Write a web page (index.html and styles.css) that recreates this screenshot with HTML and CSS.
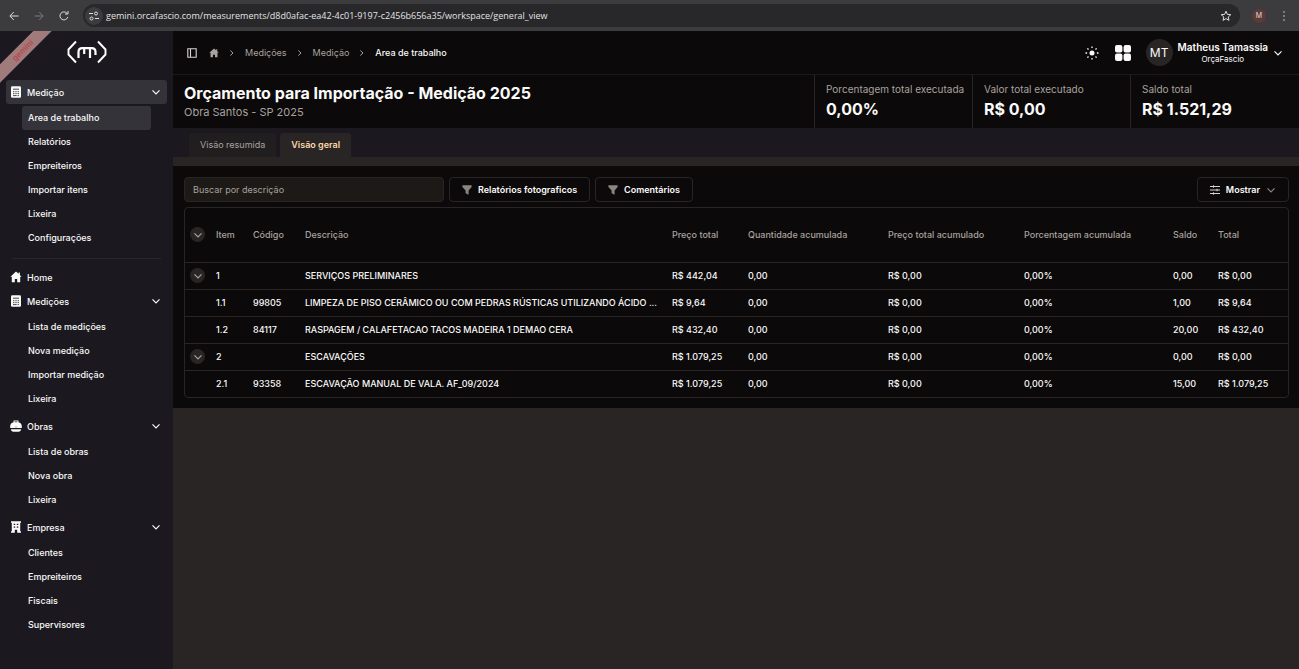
FILE: index.html
```html
<!DOCTYPE html>
<html lang="pt-BR">
<head>
    <meta charset="UTF-8">
    <meta name="viewport" content="width=device-width, initial-scale=1.0">
    <title>Orçamento para Importação - Medição 2025</title>
    <link rel="stylesheet" href="styles.css">
</head>
<body>
    <!-- Ícones compartilhados -->
    <svg class="sprite" aria-hidden="true">
        <symbol id="chevron" viewBox="0 0 10 10"><path d="M1.5 3.3L5 6.8l3.5-3.5" fill="none" stroke="currentColor" stroke-width="1.2"/></symbol>
        <symbol id="chevron-right" viewBox="0 0 10 10"><path d="M3.3 2.500L6 5 3.300 7.500" fill="none" stroke="currentColor" stroke-width="1"/></symbol>
        <symbol id="home" viewBox="0 0 12 12"><path d="M6 .5L.4 5.800h1.400v5.400h3V8h2.400v3.200h3V5.800h1.400L9.900 4V1.400H8.600v1.400z" fill="currentColor"/></symbol>
        <symbol id="calc" viewBox="0 0 12 12"><rect x="1" y=".3" width="10" height="11.4" rx="1.3" fill="currentColor"/><path d="M3 3.200h6M3 5.700h1.400M5.300 5.700h1.400M7.600 5.700H9M3 7.600h1.400M5.300 7.600h1.400M7.600 7.600H9M3 9.600h3.700M7.600 9.600H9" stroke="#1b191f" stroke-width=".8"/></symbol>
        <symbol id="helmet" viewBox="0 0 12 12"><path d="M.2 8V6.200C.2 4 1.600 2.500 3.500 2.200V.6h5v1.600c1.900.3 3.300 1.800 3.300 4V8zM.8 9.300h10.400c-.3 1.500-1.200 2.400-2.500 2.400H3.300C2 11.700 1.100 10.800.8 9.300z" fill="currentColor"/><path d="M4.500 1.800h3M5.500 7h1" stroke="#1b191f" stroke-width=".7"/></symbol>
        <symbol id="building" viewBox="0 0 12 12"><path d="M1 .3h10v1.500h-.8v8.500h.8v1.400H7.200V8.800H4.800v2.900H1v-1.400h.8V1.800H1z" fill="currentColor"/><path d="M3.700 3.300h1.500M6.800 3.300h1.500M3.700 6.100h1.500M6.800 6.100h1.500" stroke="#1b191f" stroke-width="1.300"/></symbol>
        <symbol id="funnel" viewBox="0 0 10 10"><path d="M.4.300h9.200v1.800L6.600 5.400v4.300L3.600 8.200V5.400L.4 2.100z" fill="currentColor"/></symbol>
    </svg>

    <div class="browser">
        <button class="nav-btn" aria-label="Voltar"><svg viewBox="0 0 12 12"><path d="M10.500 6H2M5.800 2L1.800 6l4 4"/></svg></button>
        <button class="nav-btn dim" aria-label="Avançar"><svg viewBox="0 0 12 12"><path d="M1.500 6H10M6.200 2l4 4-4 4"/></svg></button>
        <button class="nav-btn" aria-label="Recarregar"><svg viewBox="0 0 12 12"><path d="M9.800 7A4 4 0 1 1 9 3.300M10 1v3H7"/></svg></button>
        <div class="address">
            <button class="site-info" aria-label="Informações do site"><svg viewBox="0 0 12 12"><path d="M1 3.500h4M7 8.500h4"/><circle cx="8" cy="3.500" r="1.500"/><circle cx="3.500" cy="8.500" r="1.500"/></svg></button>
            <input class="url" type="text" aria-label="Endereço" value="gemini.orcafascio.com/measurements/d8d0afac-ea42-4c01-9197-c2456b656a35/workspace/general_view">
            <button class="star" aria-label="Favorito"><svg viewBox="0 0 12 12"><path d="M6 1.200l1.400 3.200 3.400.3-2.600 2.300.8 3.400L6 8.600l-3 1.800.8-3.400L1.200 4.700l3.400-.3z"/></svg></button>
        </div>
        <span class="profile">M</span>
        <button class="nav-btn" aria-label="Menu"><svg viewBox="0 0 12 12"><path d="M6 1.200v1.600M6 5.200v1.600M6 9.200v1.600"/></svg></button>
    </div>

    <div class="app">
        <aside class="sidebar">
            <div class="ribbon"><span>gemini</span></div>
            <svg class="logo" viewBox="0 0 40 24"><path d="M9 1.500L1.500 9.500v5L9 22.500M31 1.500l7.500 8v5L31 22.500" fill="none" stroke="#fff" stroke-width="1.900"/><path d="M11.500 18v-6q0-3.800 3.800-3.800h9.400q3.800 0 3.800 3.800v3M17.200 14V8.200M23 18V8.200" fill="none" stroke="#fff" stroke-width="2.200"/></svg>

            <nav>
                <button class="menu active"><svg><use href="#calc"/></svg>Medição<svg class="arrow"><use href="#chevron"/></svg></button>
                <ul>
                    <li><a class="current" href="#">Area de trabalho</a></li>
                    <li><a href="#">Relatórios</a></li>
                    <li><a href="#">Empreiteiros</a></li>
                    <li><a href="#">Importar itens</a></li>
                    <li><a href="#">Lixeira</a></li>
                    <li><a href="#">Configurações</a></li>
                </ul>
                <hr>
                <a class="menu" href="#"><svg><use href="#home"/></svg>Home</a>
                <button class="menu"><svg><use href="#calc"/></svg>Medições<svg class="arrow"><use href="#chevron"/></svg></button>
                <ul>
                    <li><a href="#">Lista de medições</a></li>
                    <li><a href="#">Nova medição</a></li>
                    <li><a href="#">Importar medição</a></li>
                    <li><a href="#">Lixeira</a></li>
                </ul>
                <button class="menu"><svg><use href="#helmet"/></svg>Obras<svg class="arrow"><use href="#chevron"/></svg></button>
                <ul>
                    <li><a href="#">Lista de obras</a></li>
                    <li><a href="#">Nova obra</a></li>
                    <li><a href="#">Lixeira</a></li>
                </ul>
                <button class="menu"><svg><use href="#building"/></svg>Empresa<svg class="arrow"><use href="#chevron"/></svg></button>
                <ul>
                    <li><a href="#">Clientes</a></li>
                    <li><a href="#">Empreiteiros</a></li>
                    <li><a href="#">Fiscais</a></li>
                    <li><a href="#">Supervisores</a></li>
                </ul>
            </nav>
        </aside>

        <main>
            <header class="topbar">
                <button class="toggle" aria-label="Alternar menu"><svg viewBox="0 0 10 10"><path d="M.8.800h8.400v8.400H.800zM3.500.800v8.400" fill="none" stroke="currentColor" stroke-width="1.100"/></svg></button>
                <nav class="breadcrumb">
                    <a href="#" aria-label="Início"><svg class="house"><use href="#home"/></svg></a>
                    <svg><use href="#chevron-right"/></svg>
                    <a href="#">Medições</a>
                    <svg><use href="#chevron-right"/></svg>
                    <a href="#">Medição</a>
                    <svg><use href="#chevron-right"/></svg>
                    <span class="here">Area de trabalho</span>
                </nav>
                <button class="theme" aria-label="Tema"><svg viewBox="0 0 14 14"><circle cx="7" cy="7" r="2.500" fill="currentColor"/><path d="M7 .5v1.600M7 11.900v1.600M.5 7h1.600M11.900 7h1.600M2.400 2.400l1.100 1.100M10.500 10.500l1.100 1.100M2.400 11.600l1.100-1.100M10.500 3.500l1.100-1.100" stroke="currentColor" stroke-width="1.300"/></svg></button>
                <button class="apps" aria-label="Aplicativos"><svg viewBox="0 0 16 16" fill="currentColor"><rect width="7.400" height="7.400" rx="2"/><rect x="8.600" width="7.400" height="7.400" rx="2"/><rect y="8.600" width="7.400" height="7.400" rx="2"/><rect x="8.600" y="8.600" width="7.400" height="7.400" rx="2"/></svg></button>
                <button class="user">
                    <span class="avatar">MT</span>
                    <span class="who"><strong>Matheus Tamassia</strong><small>OrçaFascio</small></span>
                    <svg><use href="#chevron"/></svg>
                </button>
            </header>

            <section class="summary">
                <div class="heading">
                    <h1>Orçamento para Importação - Medição 2025</h1>
                    <p>Obra Santos - SP 2025</p>
                </div>
                <dl class="totals">
                    <div><dt>Porcentagem total executada</dt><dd>0,00%</dd></div>
                    <div><dt>Valor total executado</dt><dd>R$ 0,00</dd></div>
                    <div><dt>Saldo total</dt><dd>R$ 1.521,29</dd></div>
                </dl>
            </section>

            <div class="tabs">
                <button>Visão resumida</button>
                <button class="selected">Visão geral</button>
            </div>

            <section class="content">
                <div class="toolbar">
                    <input type="text" placeholder="Buscar por descrição" aria-label="Buscar por descrição">
                    <button><svg><use href="#funnel"/></svg>Relatórios fotograficos</button>
                    <button><svg><use href="#funnel"/></svg>Comentários</button>
                    <button class="show"><svg class="sliders" viewBox="0 0 10 10"><path d="M0 1.500h10M0 5h10M0 8.500h10M3.500.300v2.400M7 3.800v2.400M3.500 7.300v2.400" stroke="currentColor" fill="none"/></svg>Mostrar<svg><use href="#chevron"/></svg></button>
                </div>

                <div class="table-box">
                    <table>
                        <colgroup>
                            <col class="c-toggle"><col class="c-item"><col class="c-code"><col><col class="c-price"><col class="c-qty"><col class="c-acc"><col class="c-pct"><col class="c-balance"><col class="c-total">
                        </colgroup>
                        <thead>
                            <tr>
                                <th><button class="fold" aria-label="Recolher tudo"><svg><use href="#chevron"/></svg></button></th>
                                <th>Item</th>
                                <th>Código</th>
                                <th>Descrição</th>
                                <th>Preço total</th>
                                <th>Quantidade acumulada</th>
                                <th>Preço total acumulado</th>
                                <th>Porcentagem acumulada</th>
                                <th>Saldo</th>
                                <th>Total</th>
                            </tr>
                        </thead>
                        <tbody>
                            <tr><td><button class="fold" aria-label="Recolher 1"><svg><use href="#chevron"/></svg></button></td><td>1</td><td></td><td class="desc">SERVIÇOS PRELIMINARES</td><td>R$ 442,04</td><td>0,00</td><td>R$ 0,00</td><td>0,00%</td><td>0,00</td><td>R$ 0,00</td></tr>
                            <tr><td></td><td>1.1</td><td>99805</td><td class="desc">LIMPEZA DE PISO CERÂMICO OU COM PEDRAS RÚSTICAS UTILIZANDO ÁCIDO ...</td><td>R$ 9,64</td><td>0,00</td><td>R$ 0,00</td><td>0,00%</td><td>1,00</td><td>R$ 9,64</td></tr>
                            <tr><td></td><td>1.2</td><td>84117</td><td class="desc">RASPAGEM / CALAFETACAO TACOS MADEIRA 1 DEMAO CERA</td><td>R$ 432,40</td><td>0,00</td><td>R$ 0,00</td><td>0,00%</td><td>20,00</td><td>R$ 432,40</td></tr>
                            <tr><td><button class="fold" aria-label="Recolher 2"><svg><use href="#chevron"/></svg></button></td><td>2</td><td></td><td class="desc">ESCAVAÇÕES</td><td>R$ 1.079,25</td><td>0,00</td><td>R$ 0,00</td><td>0,00%</td><td>0,00</td><td>R$ 0,00</td></tr>
                            <tr><td></td><td>2.1</td><td>93358</td><td class="desc">ESCAVAÇÃO MANUAL DE VALA. AF_09/2024</td><td>R$ 1.079,25</td><td>0,00</td><td>R$ 0,00</td><td>0,00%</td><td>15,00</td><td>R$ 1.079,25</td></tr>
                        </tbody>
                    </table>
                </div>
            </section>
        </main>
    </div>
</body>
</html>
```
FILE: styles.css
```css
* {
    box-sizing: border-box;
}
body {
    margin: 0;
    min-height: 100vh;
    display: flex;
    flex-direction: column;
    background-color: #292524;
    color: #fafaf9;
    font-family: Inter, "Liberation Sans", sans-serif;
    font-size: 10px;
}
button {
    background: none;
    border: none;
    padding: 0;
    color: inherit;
    font: inherit;
    cursor: pointer;
}
a {
    color: inherit;
    text-decoration: none;
}
svg {
    width: 10px;
    height: 10px;
    flex-shrink: 0;
}
.sprite {
    display: none;
}

/* Barra do navegador */
.browser {
    display: flex;
    align-items: center;
    gap: 12px;
    height: 31px;
    padding: 0 8px;
    background-color: #3c3b3d;
    color: #dddddd;
}
.browser svg {
    display: block;
    width: 12px;
    height: 12px;
    fill: none;
    stroke: currentColor;
    stroke-width: 1;
}
.nav-btn {
    width: 13px;
}
.nav-btn.dim {
    color: #7c7b7d;
}
.address {
    flex: 1;
    display: flex;
    align-items: center;
    height: 23px;
    padding: 0 8px 0 2px;
    border-radius: 12px;
    background-color: #28272a;
}
.site-info {
    display: flex;
    align-items: center;
    justify-content: center;
    width: 18px;
    height: 18px;
    border-radius: 50%;
    background-color: #3c3b3d;
}
.url {
    flex: 1;
    padding: 0 0 0 3px;
    border: none;
    background: none;
    color: #e3e3e3;
    font-family: "Open Sans", sans-serif;
    font-size: 9px;
}
.profile {
    width: 14px;
    height: 14px;
    border-radius: 50%;
    background-color: #5d3a35;
    font-size: 7px;
    line-height: 14px;
    text-align: center;
}

/* Menu lateral */
.app {
    flex: 1;
    display: flex;
}
.sidebar {
    position: relative;
    width: 173px;
    padding: 9px 6px;
    overflow: hidden;
    background-color: #1b191f;
    font-size: 9px;
    font-weight: 500;
}
.logo {
    display: block;
    width: 40px;
    height: 24px;
    margin: 0 auto 16px;
}
.ribbon {
    position: absolute;
    top: 13px;
    left: -37px;
    width: 120px;
    height: 13px;
    background-color: #a17b7c;
    color: #bb4549;
    font-size: 8px;
    font-weight: 600;
    line-height: 12px;
    text-align: center;
    transform: rotate(-45deg);
}
.menu {
    display: flex;
    align-items: center;
    gap: 5px;
    width: 100%;
    height: 24px;
    padding: 0 6px 0 4px;
    border-radius: 3px;
}
.menu svg {
    width: 12px;
    height: 12px;
}
.menu .arrow {
    width: 10px;
    height: 10px;
    margin-left: auto;
}
.menu.active, .current {
    background-color: #35333a;
}
.sidebar ul {
    margin: 2px 16px 3px;
    padding: 0;
    list-style: none;
}
.sidebar li a {
    display: block;
    padding: 0 6px;
    border-radius: 3px;
    line-height: 24px;
}
.sidebar hr {
    margin: 8px 6px 6px;
    border: none;
    border-top: 1px solid #29272d;
}

/* Cabeçalho */
main {
    flex: 1;
    min-width: 0;
}
.topbar {
    display: flex;
    align-items: center;
    height: 44px;
    padding: 0 16px 0 14px;
    border-bottom: 1px solid #1c1917;
    background-color: #0c090a;
}
.topbar svg {
    display: block;
}
.toggle {
    color: #d6d3d1;
}
.breadcrumb {
    display: flex;
    align-items: center;
    gap: 8px;
    margin: 0 auto 0 12px;
    color: #a8a29e;
    font-size: 9px;
}
.breadcrumb .here {
    color: #fafaf9;
    font-weight: 500;
}
.theme svg {
    width: 14px;
    height: 14px;
}
.apps {
    margin: 0 15px 0 16px;
}
.apps svg {
    width: 16px;
    height: 16px;
}
.user {
    display: flex;
    align-items: center;
    gap: 5px;
}
.avatar {
    width: 27px;
    height: 27px;
    border-radius: 50%;
    background-color: #292524;
    font-size: 12px;
    line-height: 27px;
}
.who strong, .who small {
    display: block;
    line-height: 12px;
}
.who strong {
    font-weight: 600;
}
.who small {
    font-size: 8px;
}

/* Resumo */
.summary {
    display: flex;
    justify-content: space-between;
    height: 53px;
    background-color: #0c090a;
}
.heading {
    padding: 7px 11px;
}
h1 {
    margin: 0;
    font-size: 16px;
    font-weight: 700;
    line-height: 22px;
}
.heading p {
    margin: 0;
    color: #a8a29e;
    font-size: 11px;
    line-height: 16px;
}
.totals {
    display: flex;
    margin: 0;
    padding-right: 11px;
}
.totals div {
    width: 158px;
    padding: 8px 0 0 11px;
    border-left: 1px solid #292524;
    white-space: nowrap;
}
.totals dt {
    color: #a8a29e;
    line-height: 13px;
}
.totals dd {
    margin: 4px 0 0;
    font-size: 16px;
    font-weight: 700;
    line-height: 18px;
}

.tabs {
    display: flex;
    gap: 4px;
    height: 29px;
    padding: 5px 16px 0;
    background-color: #1b191f;
    font-size: 9px;
}
.tabs button {
    padding: 0 11px 2px;
    border-radius: 3px 3px 0 0;
    background-color: #211e20;
    color: #a8a29e;
}
.tabs .selected {
    background-color: #292524;
    color: #fed7aa;
    font-weight: 600;
}

/* Filtros e tabela */
.content {
    margin-top: 9px;
    padding: 11px 10px 10px 11px;
    background-color: #0c090a;
}
.toolbar {
    display: flex;
    gap: 5px;
    margin-bottom: 5px;
    font-size: 9px;
}
.toolbar input {
    width: 260px;
    height: 25px;
    padding: 0 8px;
    border: 1px solid #292524;
    border-radius: 4px;
    background-color: #1c1917;
    color: inherit;
    font: inherit;
}
.toolbar input::placeholder {
    color: #a8a29e;
}
.toolbar button {
    display: flex;
    align-items: center;
    gap: 6px;
    height: 25px;
    padding: 0 12px;
    border: 1px solid #292524;
    border-radius: 4px;
    font-weight: 600;
}
.toolbar button svg {
    color: #8a8580;
}
.toolbar .sliders {
    color: #d6d3d1;
}
.toolbar .show {
    margin-left: auto;
}
.table-box {
    border: 1px solid #292524;
    border-radius: 4px;
}
table {
    width: 100%;
    table-layout: fixed;
    border-collapse: collapse;
    font-size: 9px;
}
.c-toggle { width: 25px; }
.c-item { width: 37px; }
.c-code { width: 52px; }
.c-price { width: 76px; }
.c-qty { width: 140px; }
.c-acc { width: 136px; }
.c-pct { width: 149px; }
.c-balance { width: 45px; }
.c-total { width: 76px; }
th, td {
    height: 27px;
    padding: 0 6px 1px;
    text-align: left;
    white-space: nowrap;
    font-weight: 500;
}
th {
    height: 54px;
    color: #a8a29e;
}
th:first-child, td:first-child {
    padding: 0 5px;
}
.desc {
    overflow: hidden;
    text-overflow: ellipsis;
}
tbody tr {
    border-top: 1px solid #292524;
}
.fold {
    display: flex;
    align-items: center;
    justify-content: center;
    width: 15px;
    height: 15px;
    border-radius: 50%;
    background-color: #292524;
    color: #a8a29e;
}
```
